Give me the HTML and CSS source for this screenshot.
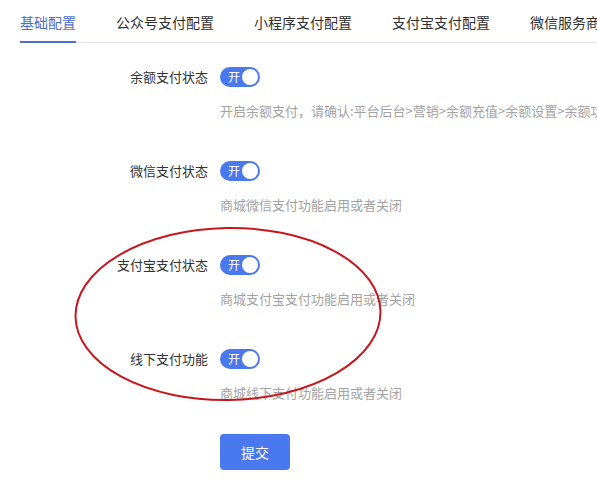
FILE: index.html
```html
<!DOCTYPE html>
<html lang="zh">
<head>
<meta charset="utf-8">
<link rel="stylesheet" href="styles.css">
</head>
<body>
<div class="page">
  <div class="tabs">
    <div class="tab active">基础配置</div>
    <div class="tab">公众号支付配置</div>
    <div class="tab">小程序支付配置</div>
    <div class="tab">支付宝支付配置</div>
    <div class="tab">微信服务商支付配置</div>
  </div>
  <div class="form">
    <div class="item">
      <div class="label">余额支付状态</div>
      <div class="content">
        <div class="switch"><span class="sw-text">开</span><span class="knob"></span></div>
        <div class="desc">开启余额支付，请确认:平台后台&gt;营销&gt;余额充值&gt;余额设置&gt;余额功能启用</div>
      </div>
    </div>
    <div class="item">
      <div class="label">微信支付状态</div>
      <div class="content">
        <div class="switch"><span class="sw-text">开</span><span class="knob"></span></div>
        <div class="desc">商城微信支付功能启用或者关闭</div>
      </div>
    </div>
    <div class="item">
      <div class="label">支付宝支付状态</div>
      <div class="content">
        <div class="switch"><span class="sw-text">开</span><span class="knob"></span></div>
        <div class="desc">商城支付宝支付功能启用或者关闭</div>
      </div>
    </div>
    <div class="item last">
      <div class="label">线下支付功能</div>
      <div class="content">
        <div class="switch"><span class="sw-text">开</span><span class="knob"></span></div>
        <div class="desc">商城线下支付功能启用或者关闭</div>
      </div>
    </div>
    <div class="actions">
      <button class="submit">提交</button>
    </div>
  </div>
  <svg class="mark" width="320" height="182" viewBox="0 0 320 182">
    <ellipse cx="155" cy="89" rx="152.5" ry="86" fill="none" stroke="#c8161e" stroke-width="2" transform="rotate(-1 155 89)"/>
  </svg>
</div>
</body>
</html>
```

FILE: styles.css
```css
html, body {
  margin: 0;
  padding: 0;
  background: #fff;
}
body {
  font-family: "Microsoft YaHei", "Noto Sans CJK SC", "Noto Sans", sans-serif;
  color: #333;
  overflow: hidden;
}
.page {
  position: relative;
  width: 597px;
  height: 493px;
  overflow: hidden;
}
.tabs {
  display: flex;
  margin-left: 20px;
  height: 42px;
  border-bottom: 1px solid #e4e7ed;
  white-space: nowrap;
  box-sizing: border-box;
  height: 43px;
}
.tab {
  font-size: 14px;
  line-height: 42px;
  height: 42px;
  padding: 0 20px;
  color: #303133;
  flex: none;
  box-sizing: border-box;
  position: relative;
  padding-top: 1px;
}
.tab:first-child {
  padding-left: 0;
}
.tab.active {
  color: #4a6fd4;
}
.tab.active::after {
  content: "";
  position: absolute;
  left: 0;
  right: 20px;
  bottom: -1px;
  height: 2px;
  background: #4a6fd4;
}
.form {
  padding-top: 24px;
}
.item {
  display: flex;
  margin-bottom: 40px;
}
.item.last {
  margin-bottom: 31px;
}
.label {
  width: 220px;
  flex: none;
  box-sizing: border-box;
  padding-right: 12px;
  text-align: right;
  font-size: 13px;
  line-height: 20px;
  color: #333;
}
.content {
  flex: 1;
  min-width: 0;
}
.switch {
  width: 40px;
  height: 20px;
  border-radius: 10px;
  background: #4a78ef;
  display: flex;
  align-items: center;
  justify-content: space-between;
  padding: 0 2px 0 8px;
  box-sizing: border-box;
}
.sw-text {
  color: #fff;
  font-size: 12px;
  line-height: 20px;
}
.knob {
  width: 16px;
  height: 16px;
  border-radius: 50%;
  background: #fff;
}
.desc {
  margin-top: 14px;
  font-size: 13px;
  line-height: 20px;
  color: #a3a3a3;
  white-space: nowrap;
}
.actions {
  padding-left: 220px;
}
.submit {
  width: 70px;
  height: 36px;
  border: none;
  border-radius: 4px;
  background: #4a78ef;
  color: #fff;
  font-family: inherit;
  font-size: 14px;
  padding: 0;
  cursor: pointer;
}
.mark {
  position: absolute;
  left: 73px;
  top: 225px;
  pointer-events: none;
}
```
